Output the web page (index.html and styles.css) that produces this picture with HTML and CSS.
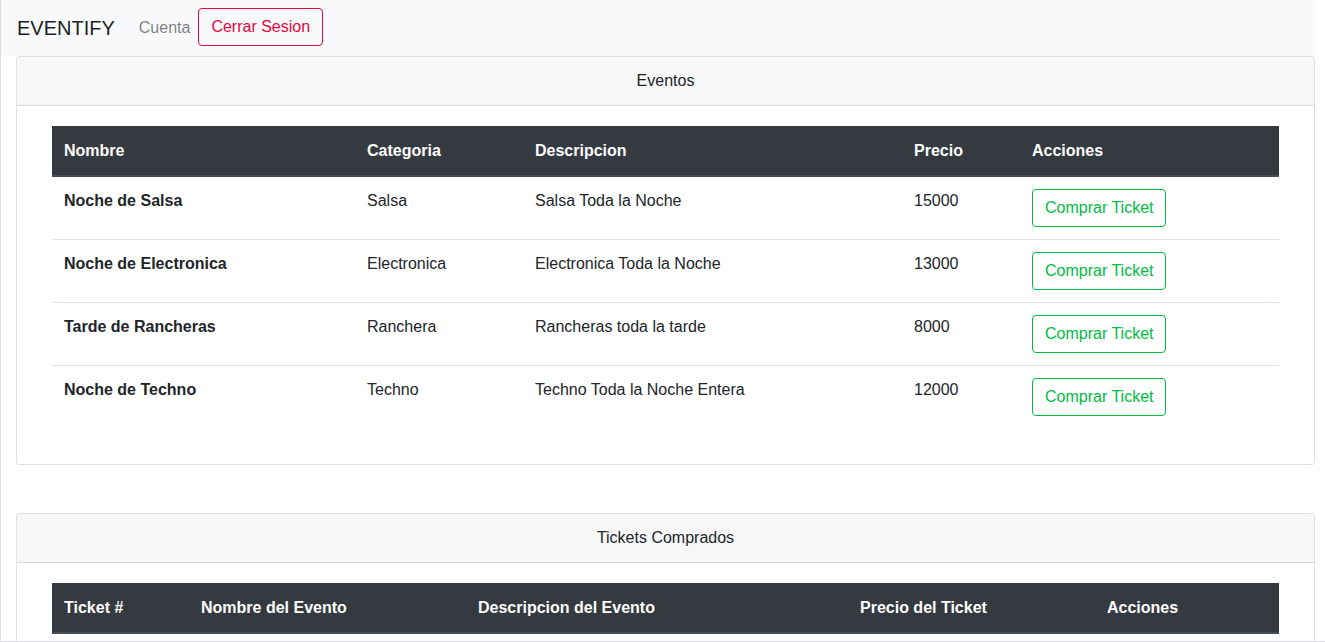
FILE: index.html
```html
<!DOCTYPE html>
<html lang="es">
<head>
<meta charset="utf-8">
<title>Eventify</title>
<link rel="stylesheet" href="styles.css">
</head>
<body>
<div class="frame">
  <nav class="navbar">
    <span class="brand">EVENTIFY</span>
    <span class="nav-link">Cuenta</span>
    <button class="btn btn-danger-outline nav-btn">Cerrar Sesion</button>
  </nav>

  <section class="card">
    <div class="card-header">Eventos</div>
    <div class="card-body">
      <table class="table">
        <thead>
          <tr>
            <th class="c-nombre">Nombre</th>
            <th class="c-cat">Categoria</th>
            <th class="c-desc">Descripcion</th>
            <th class="c-precio">Precio</th>
            <th class="c-acc">Acciones</th>
          </tr>
        </thead>
        <tbody>
          <tr>
            <th>Noche de Salsa</th>
            <td>Salsa</td>
            <td>Salsa Toda la Noche</td>
            <td>15000</td>
            <td><button class="btn btn-success-outline">Comprar Ticket</button></td>
          </tr>
          <tr>
            <th>Noche de Electronica</th>
            <td>Electronica</td>
            <td>Electronica Toda la Noche</td>
            <td>13000</td>
            <td><button class="btn btn-success-outline">Comprar Ticket</button></td>
          </tr>
          <tr>
            <th>Tarde de Rancheras</th>
            <td>Ranchera</td>
            <td>Rancheras toda la tarde</td>
            <td>8000</td>
            <td><button class="btn btn-success-outline">Comprar Ticket</button></td>
          </tr>
          <tr>
            <th>Noche de Techno</th>
            <td>Techno</td>
            <td>Techno Toda la Noche Entera</td>
            <td>12000</td>
            <td><button class="btn btn-success-outline">Comprar Ticket</button></td>
          </tr>
        </tbody>
      </table>
    </div>
  </section>

  <section class="card card-spaced">
    <div class="card-header">Tickets Comprados</div>
    <div class="card-body">
      <table class="table">
        <thead>
          <tr>
            <th class="t-num">Ticket #</th>
            <th class="t-nombre">Nombre del Evento</th>
            <th class="t-desc">Descripcion del Evento</th>
            <th class="t-precio">Precio del Ticket</th>
            <th class="t-acc">Acciones</th>
          </tr>
        </thead>
        <tbody></tbody>
      </table>
    </div>
  </section>
</div>
</body>
</html>
```

FILE: styles.css
```css
html, body {
  margin: 0;
  padding: 0;
  overflow: hidden;
  height: 100%;
}
body {
  font-family: "Liberation Sans", Arial, sans-serif;
  font-size: 16px;
  line-height: 24px;
  color: #212529;
  background: #fff;
}
body::after {
  content: "";
  position: fixed;
  left: 0;
  top: 0;
  right: 0;
  bottom: 0;
  border-left: 1px solid #dcdde1;
  border-bottom: 1px solid #dcdde1;
  pointer-events: none;
}
.frame {
  width: 1314px;
  padding-left: 1px;
}
.navbar {
  display: flex;
  align-items: center;
  height: 56px;
  box-sizing: border-box;
  padding: 8px 16px;
  background: #f8f9fa;
}
.brand {
  font-size: 20px;
  line-height: 30px;
  padding: 5px 0;
  margin-right: 16px;
  color: rgba(0, 0, 0, 0.9);
}
.nav-link {
  padding: 8px;
  color: rgba(0, 0, 0, 0.5);
}
.nav-btn {
  align-self: flex-start;
}
.btn {
  font-family: inherit;
  font-size: 16px;
  line-height: 24px;
  padding: 6px 12px;
  border: 1px solid;
  border-radius: 4px;
  background: transparent;
  cursor: pointer;
}
.btn-danger-outline {
  color: #e2073f;
  border-color: #e2073f;
}
.btn-success-outline {
  color: #00bc44;
  border-color: #00bc44;
}
.card {
  margin-left: 15px;
  border: 1px solid rgba(0, 0, 0, 0.125);
  border-radius: 4px;
  background: #fff;
}
.card-spaced {
  margin-top: 48px;
}
.card-header {
  padding: 12px 20px;
  text-align: center;
  background: #f7f7f7;
  border-bottom: 1px solid rgba(0, 0, 0, 0.125);
  border-radius: 3px 3px 0 0;
}
.card-body {
  padding: 20px 35px;
}
.table {
  width: 100%;
  table-layout: fixed;
  border-collapse: collapse;
  margin-bottom: 16px;
}
.table th, .table td {
  box-sizing: border-box;
  padding: 12px;
  text-align: left;
  vertical-align: top;
  border-top: 1px solid #dee2e6;
}
.table tbody th {
  font-weight: bold;
}
.table thead th {
  background: #343a40;
  color: #fff;
  font-weight: bold;
  border-top: 1px solid #343a40;
  border-bottom: 2px solid #454d55;
}
.c-nombre { width: 303px; }
.c-cat { width: 168px; }
.c-desc { width: 379px; }
.c-precio { width: 118px; }
.c-acc { width: 259px; }
.t-num { width: 137px; }
.t-nombre { width: 277px; }
.t-desc { width: 382px; }
.t-precio { width: 247px; }
.t-acc { width: 184px; }
```
